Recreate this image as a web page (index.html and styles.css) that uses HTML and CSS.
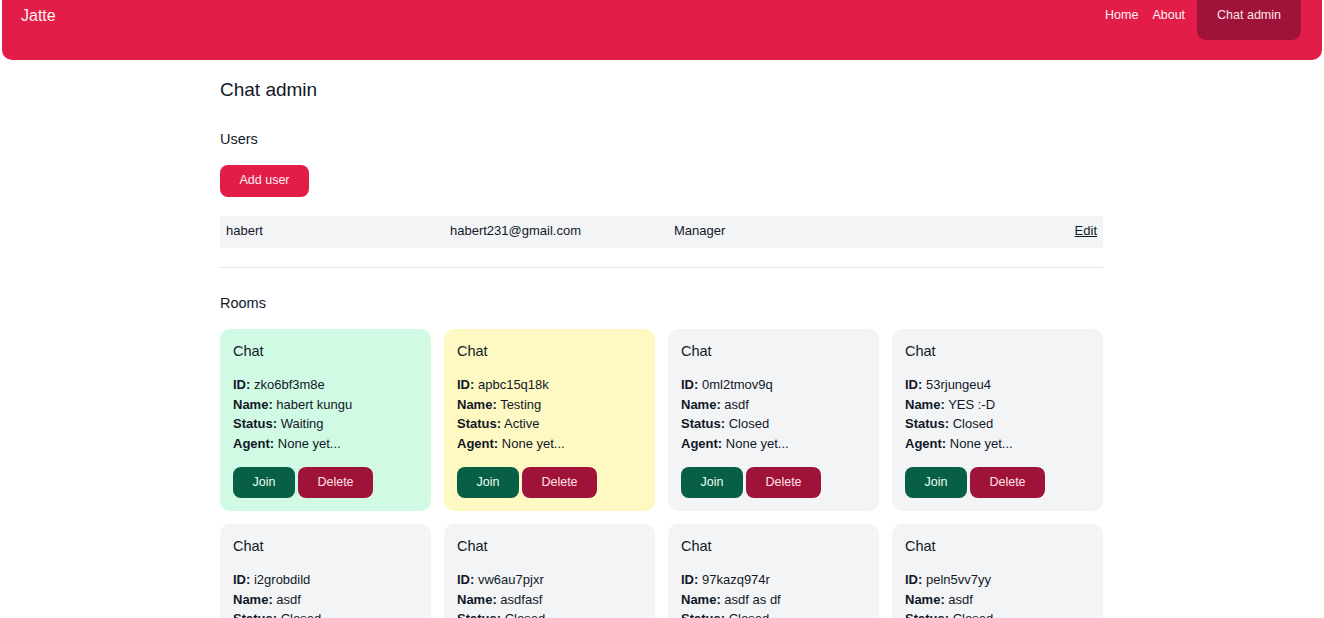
FILE: index.html
```html
<!DOCTYPE html>
<html lang="en">
<head>
<meta charset="utf-8">
<title>Chat admin - Jatte</title>
<link rel="stylesheet" href="styles.css">
</head>
<body>
<header class="topbar">
  <a class="brand" href="#">Jatte</a>
  <nav class="nav">
    <a class="nav-link" href="#">Home</a>
    <a class="nav-link" href="#">About</a>
    <a class="nav-btn" href="#">Chat admin</a>
  </nav>
</header>

<main class="content">
  <h1 class="page-title">Chat admin</h1>

  <h2 class="section-title">Users</h2>
  <a class="btn btn-rose" href="#">Add user</a>

  <div class="user-row">
    <span>habert</span>
    <span>habert231@gmail.com</span>
    <span>Manager</span>
    <a class="edit-link" href="#">Edit</a>
  </div>

  <hr class="divider">

  <h2 class="section-title rooms-title">Rooms</h2>

  <div class="rooms">
    <div class="room room-waiting">
      <h3 class="room-title">Chat</h3>
      <p class="room-info"><b>ID:</b> zko6bf3m8e<br><b>Name:</b> habert kungu<br><b>Status:</b> Waiting<br><b>Agent:</b> None yet...</p>
      <div class="room-actions"><a class="btn btn-green" href="#">Join</a><a class="btn btn-dark" href="#">Delete</a></div>
    </div>
    <div class="room room-active">
      <h3 class="room-title">Chat</h3>
      <p class="room-info"><b>ID:</b> apbc15q18k<br><b>Name:</b> Testing<br><b>Status:</b> Active<br><b>Agent:</b> None yet...</p>
      <div class="room-actions"><a class="btn btn-green" href="#">Join</a><a class="btn btn-dark" href="#">Delete</a></div>
    </div>
    <div class="room">
      <h3 class="room-title">Chat</h3>
      <p class="room-info"><b>ID:</b> 0ml2tmov9q<br><b>Name:</b> asdf<br><b>Status:</b> Closed<br><b>Agent:</b> None yet...</p>
      <div class="room-actions"><a class="btn btn-green" href="#">Join</a><a class="btn btn-dark" href="#">Delete</a></div>
    </div>
    <div class="room">
      <h3 class="room-title">Chat</h3>
      <p class="room-info"><b>ID:</b> 53rjungeu4<br><b>Name:</b> YES :-D<br><b>Status:</b> Closed<br><b>Agent:</b> None yet...</p>
      <div class="room-actions"><a class="btn btn-green" href="#">Join</a><a class="btn btn-dark" href="#">Delete</a></div>
    </div>
    <div class="room">
      <h3 class="room-title">Chat</h3>
      <p class="room-info"><b>ID:</b> i2grobdild<br><b>Name:</b> asdf<br><b>Status:</b> Closed<br><b>Agent:</b> None yet...</p>
      <div class="room-actions"><a class="btn btn-green" href="#">Join</a><a class="btn btn-dark" href="#">Delete</a></div>
    </div>
    <div class="room">
      <h3 class="room-title">Chat</h3>
      <p class="room-info"><b>ID:</b> vw6au7pjxr<br><b>Name:</b> asdfasf<br><b>Status:</b> Closed<br><b>Agent:</b> None yet...</p>
      <div class="room-actions"><a class="btn btn-green" href="#">Join</a><a class="btn btn-dark" href="#">Delete</a></div>
    </div>
    <div class="room">
      <h3 class="room-title">Chat</h3>
      <p class="room-info"><b>ID:</b> 97kazq974r<br><b>Name:</b> asdf as df<br><b>Status:</b> Closed<br><b>Agent:</b> None yet...</p>
      <div class="room-actions"><a class="btn btn-green" href="#">Join</a><a class="btn btn-dark" href="#">Delete</a></div>
    </div>
    <div class="room">
      <h3 class="room-title">Chat</h3>
      <p class="room-info"><b>ID:</b> peln5vv7yy<br><b>Name:</b> asdf<br><b>Status:</b> Closed<br><b>Agent:</b> None yet...</p>
      <div class="room-actions"><a class="btn btn-green" href="#">Join</a><a class="btn btn-dark" href="#">Delete</a></div>
    </div>
  </div>
</main>
</body>
</html>
```

FILE: styles.css
```css
* { box-sizing: border-box; }

body {
  margin: 0;
  font-family: "Liberation Sans", Arial, sans-serif;
  color: #111827;
  background: #ffffff;
}

a { color: inherit; text-decoration: none; }

.topbar {
  margin: 0 2px;
  height: 60px;
  background: #e11d48;
  border-radius: 0 0 10px 10px;
  display: flex;
  justify-content: space-between;
  align-items: flex-start;
  padding: 0 21px 0 19px;
}

.brand {
  font-size: 16px;
  line-height: 24px;
  padding: 4px 0 0;
  color: #fff1f2;
}

.nav {
  display: flex;
  align-items: flex-start;
}

.nav-link {
  font-size: 12.5px;
  line-height: 24px;
  padding: 3px 7px 0;
  color: #fff1f2;
}

.nav-link + .nav-link { padding-right: 6px; }

.nav-btn {
  margin-left: 6px;
  font-size: 12.5px;
  line-height: 24px;
  padding: 3px 20px 13px;
  background: #9f1239;
  color: #ffe4e6;
  border-radius: 0 0 9px 9px;
}

.content {
  width: 883px;
  margin: 0 auto;
  padding-right: 1px;
  box-sizing: content-box;
}

.page-title {
  margin: 16px 0 0;
  font-size: 19px;
  line-height: 28px;
  font-weight: 400;
}

.section-title {
  margin: 24px 0 0;
  font-size: 14.5px;
  line-height: 22px;
  font-weight: 400;
}

.rooms-title { margin-top: 24px; }

.btn {
  display: inline-block;
  font-size: 12.5px;
  line-height: 19px;
  padding: 6px 19.5px;
  border-radius: 8px;
}

.btn-rose {
  margin-top: 15px;
  padding-top: 6px;
  padding-bottom: 7px;
  background: #e11d48;
  color: #fff1f2;
}

.btn-green {
  background: #065f46;
  color: #ecfdf5;
}

.btn-dark {
  background: #9f1239;
  color: #ffe4e6;
}

.user-row {
  margin-top: 19px;
  background: #f3f4f6;
  display: grid;
  grid-template-columns: 224px 224px 224px 1fr;
  padding: 5px 6px 7px;
  font-size: 13px;
  line-height: 20px;
}

.edit-link {
  justify-self: end;
  text-decoration: underline;
}

.divider {
  margin: 19px 0 0;
  border: 0;
  border-top: 1px solid #e5e7eb;
}

.rooms {
  margin-top: 15px;
  display: grid;
  grid-template-columns: repeat(4, 1fr);
  gap: 13px;
}

.room {
  background: #f3f4f6;
  border-radius: 10px;
  padding: 11px 12px 13px 13px;
}

.room-waiting { background: #d1fae5; }
.room-active { background: #fef9c3; }

.room-title {
  margin: 0;
  font-size: 14.5px;
  line-height: 22px;
  font-weight: 400;
}

.room-info {
  margin: 13px 0 0;
  font-size: 13px;
  line-height: 19.5px;
}

.room-actions {
  margin-top: 14px;
  display: flex;
  gap: 3px;
}
```
